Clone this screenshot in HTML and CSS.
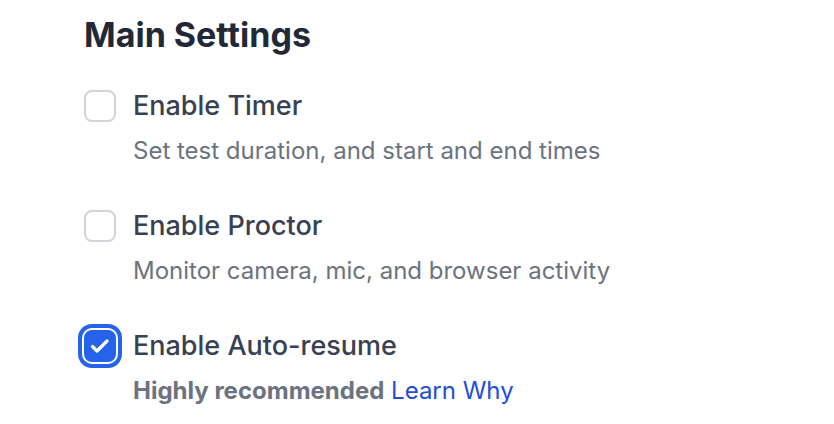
FILE: index.html
```html
<!DOCTYPE html>
<html lang="en">
<head>
    <meta charset="UTF-8">
    <meta name="viewport" content="width=device-width, initial-scale=1.0">
    <title>Main Settings</title>
    <link rel="stylesheet" href="styles.css">
</head>
<body>
    <div class="settings">
        <h1>Main Settings</h1>

        <div class="option">
            <div class="option-row">
                <span class="checkbox"></span>
                <span class="option-label">Enable Timer</span>
            </div>
            <p class="option-desc">Set test duration, and start and end times</p>
        </div>

        <div class="option">
            <div class="option-row">
                <span class="checkbox"></span>
                <span class="option-label">Enable Proctor</span>
            </div>
            <p class="option-desc">Monitor camera, mic, and browser activity</p>
        </div>

        <div class="option">
            <div class="option-row">
                <span class="checkbox checked">
                    <svg width="22" height="22" viewBox="0 0 22 22" fill="none">
                        <path d="M3.5 11.5l4.5 4.5 10-10" stroke="#ffffff" stroke-width="3.2" stroke-linecap="round" stroke-linejoin="round"/>
                    </svg>
                </span>
                <span class="option-label">Enable Auto-resume</span>
            </div>
            <p class="option-desc"><strong>Highly recommended</strong> <a href="#" class="link">Learn Why</a></p>
        </div>
    </div>
</body>
</html>
```

FILE: styles.css
```css
body {
    margin: 0;
    background-color: #ffffff;
    font-family: Inter, "Noto Sans", sans-serif;
}

.settings {
    padding: 15px 0 0 84px;
}

h1 {
    margin: 0 0 35px;
    font-size: 34px;
    line-height: 40px;
    font-weight: 700;
    color: #1f2937;
}

/* Option rows */
.option {
    margin-bottom: 43px;
}

.option-row {
    display: flex;
    align-items: center;
    gap: 17px;
}

.checkbox {
    box-sizing: border-box;
    width: 32px;
    height: 32px;
    border: 2px solid #d1d5db;
    border-radius: 8px;
    display: flex;
    align-items: center;
    justify-content: center;
    flex-shrink: 0;
}

.checkbox.checked {
    background-color: #2563eb;
    border-color: #2563eb;
    box-shadow: 0 0 0 2px #ffffff, 0 0 0 6px #2563eb;
}

.option-label {
    font-size: 27px;
    line-height: 32px;
    font-weight: 500;
    color: #374151;
}

.option-desc {
    margin: 13px 0 0 49px;
    font-size: 24px;
    line-height: 32px;
    color: #6b7280;
}

.option-desc strong {
    font-weight: 700;
}

.link {
    color: #1d4ed8;
    text-decoration: none;
}
```
